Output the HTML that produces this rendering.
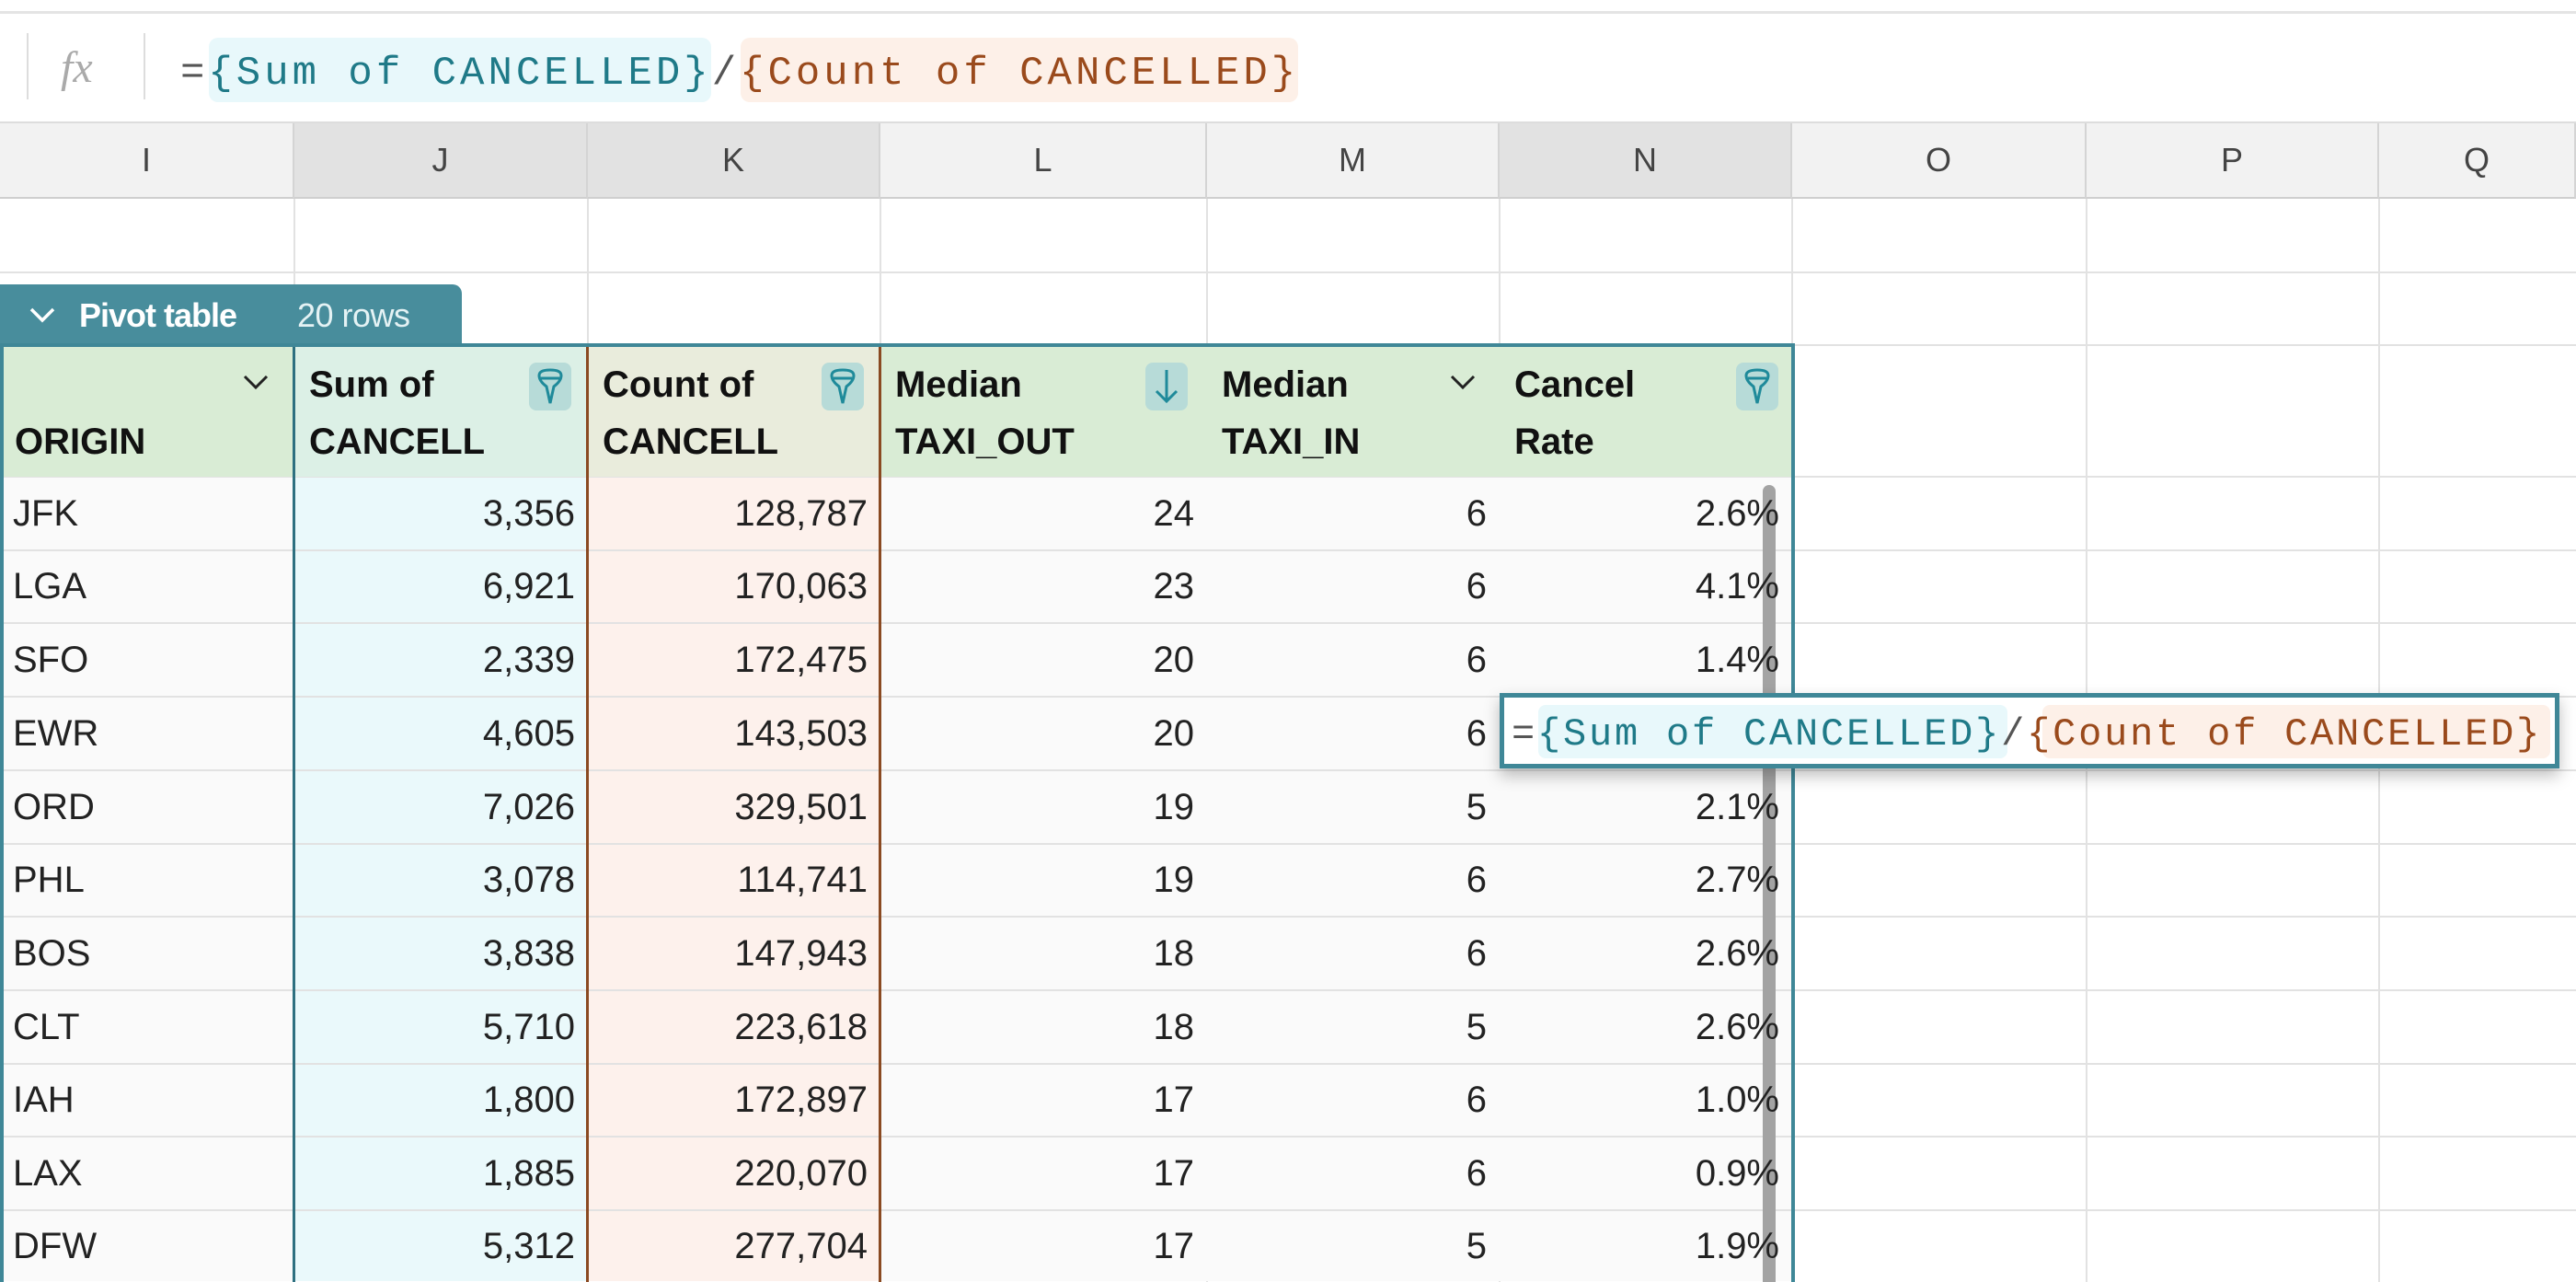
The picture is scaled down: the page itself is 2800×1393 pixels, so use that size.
<!DOCTYPE html>
<html><head><meta charset="utf-8"><style>
*{margin:0;padding:0;box-sizing:border-box}
html{width:2800px;height:1393px;overflow:hidden}
body{width:2800px;height:1393px;overflow:hidden;background:#fff;font-family:"Liberation Sans",sans-serif;position:relative}
.a{position:absolute}
.mono{font-family:"Liberation Mono",monospace}
.colh{position:absolute;top:134px;height:82px;background:#f2f2f2;border-right:2px solid #d4d4d4;border-bottom:2px solid #cfcfcf;font-size:36px;color:#444;display:flex;align-items:center;justify-content:center}
.sel{background:#e2e2e2}
.cell{position:absolute;font-size:40px;color:#222;display:flex;align-items:center;white-space:nowrap}
.ic{position:absolute;width:46px;height:52px;background:#b7dbd8;border-radius:8px}
</style></head><body>
<div class="a" style="left:0;top:12px;width:2800px;height:3px;background:#e4e4e4"></div>
<div class="a" style="left:29px;top:36px;width:2px;height:72px;background:#ddd"></div>
<div class="a" style="left:156px;top:36px;width:2px;height:72px;background:#ddd"></div>
<div class="a" style="left:66px;top:46px;font-size:48px;font-style:italic;color:#aaa;font-family:'Liberation Serif',serif">fx</div>
<div class="a" style="left:227px;top:41px;width:546px;height:70px;background:#e8f8fb;border-radius:10px"></div>
<div class="a" style="left:805px;top:41px;width:606px;height:70px;background:#fdf0e8;border-radius:10px"></div>
<div class="a mono" style="left:196px;top:55px;font-size:44px;letter-spacing:4px;white-space:nowrap;color:#555"><span>=</span><span style="color:#1f7a88">{Sum of CANCELLED}</span><span>/</span><span style="color:#9a4a1c">{Count of CANCELLED}</span></div>
<div class="a" style="left:0;top:132px;width:2800px;height:2px;background:#ddd"></div>
<div id="g"></div>
<script>
var g=document.getElementById('g'),h='';
var cols=[0,320,639,957,1312,1630,1948,2268,2586,2800],L=['I','J','K','L','M','N','O','P','Q'];
for(var i=0;i<9;i++){h+='<div class="colh'+((i==1||i==2||i==5)?' sel':'')+'" style="left:'+cols[i]+'px;width:'+(cols[i+1]-cols[i])+'px">'+L[i]+'</div>';}
for(var i=1;i<9;i++){h+='<div class="a" style="left:'+(cols[i]-1)+'px;top:216px;width:2px;height:1177px;background:#e2e2e2"></div>';}
var rl=[296,375,518];for(var k=1;k<11;k++)rl.push(Math.round(518+k*79.7));
rl.forEach(function(y){h+='<div class="a" style="left:0;top:'+(y-1)+'px;width:2800px;height:2px;background:#e2e2e2"></div>';});
h+='<div class="a" style="left:0;top:309px;width:502px;height:70px;background:#488d9c;border-radius:0 10px 0 0"></div>';
h+='<svg class="a" style="left:30px;top:330px" width="32" height="24"><path d="M4 6 L16 18 L28 6" fill="none" stroke="#fff" stroke-width="3.5"/></svg>';
h+='<div class="a" style="left:86px;top:322px;font-size:36px;font-weight:bold;color:#fff;letter-spacing:-1px">Pivot table</div>';
h+='<div class="a" style="left:323px;top:322px;font-size:36px;color:#e4f2f4;letter-spacing:-.5px">20 rows</div>';
var hb=['#d9ecd5','#dcf0e6','#e9ecdc','#d9ecd5','#d9ecd5','#d9ecd5'];
var ht=[['','ORIGIN'],['Sum of','CANCELL'],['Count of','CANCELL'],['Median','TAXI_OUT'],['Median','TAXI_IN'],['Cancel','Rate']];
for(var i=0;i<6;i++){h+='<div class="a" style="left:'+cols[i]+'px;top:375px;width:'+(cols[i+1]-cols[i])+'px;height:143px;background:'+hb[i]+'"></div>';
h+='<div class="a" style="left:'+(cols[i]+16)+'px;top:387px;font-size:40px;font-weight:bold;color:#111;line-height:62px">'+ht[i][0]+'<br>'+ht[i][1]+'</div>';}
var D=[['JFK','3,356','128,787','24','6','2.6%'],['LGA','6,921','170,063','23','6','4.1%'],['SFO','2,339','172,475','20','6','1.4%'],['EWR','4,605','143,503','20','6',''],['ORD','7,026','329,501','19','5','2.1%'],['PHL','3,078','114,741','19','6','2.7%'],['BOS','3,838','147,943','18','6','2.6%'],['CLT','5,710','223,618','18','5','2.6%'],['IAH','1,800','172,897','17','6','1.0%'],['LAX','1,885','220,070','17','6','0.9%'],['DFW','5,312','277,704','17','5','1.9%']];
var bg=['#fafafa','#eaf9fb','#fdf1ec','#fafafa','#fafafa','#fafafa'];
var txt='';
for(var r=0;r<11;r++){var y=Math.round(518+r*79.7),y2=Math.min(1393,Math.round(518+(r+1)*79.7));
for(var c=0;c<6;c++){h+='<div class="a" style="left:'+cols[c]+'px;top:'+(y+1)+'px;width:'+(cols[c+1]-cols[c])+'px;height:'+(y2-y-2)+'px;background:'+bg[c]+'"></div>';
var st=c==0?'left:'+(cols[c]+14)+'px;':'left:'+cols[c]+'px;width:'+(cols[c+1]-cols[c]-14)+'px;justify-content:flex-end;';
txt+='<div class="cell" style="'+st+'top:'+y+'px;height:'+(y2-y)+'px">'+D[r][c]+'</div>';}}
h+='<div class="a" style="left:1916px;top:527px;width:14px;height:866px;background:#a3a3a3;border-radius:7px 7px 0 0"></div>';
h+=txt;
h+='<div class="a" style="left:318px;top:375px;width:3px;height:1018px;background:#2e7080"></div>';
h+='<div class="a" style="left:637px;top:375px;width:3px;height:1018px;background:#8a4a22"></div>';
h+='<div class="a" style="left:955px;top:375px;width:3px;height:1018px;background:#8a4a22"></div>';
h+='<div class="a" style="left:0;top:373px;width:1951px;height:1020px;border:4px solid #3f8797;border-bottom:none"></div>';
[[575],[893],[1887]].forEach(function(p){h+='<div class="ic" style="left:'+p[0]+'px;top:394px"></div><svg class="a" style="left:'+p[0]+'px;top:394px" width="46" height="52"><path d="M11 14 Q11 8 23 8 Q35 8 35 14 Q35 20 27 26 L23 44 L19 26 Q11 20 11 14 Z M13 17 L33 17" fill="none" stroke="#1f8a9a" stroke-width="3"/></svg>';});
h+='<div class="ic" style="left:1245px;top:394px"></div><svg class="a" style="left:1245px;top:394px" width="46" height="52"><path d="M23 8 L23 42 M12 31 L23 42 L34 31" fill="none" stroke="#1f8a9a" stroke-width="3"/></svg>';
[[262],[1574]].forEach(function(p){h+='<svg class="a" style="left:'+p[0]+'px;top:404px" width="32" height="24"><path d="M4 5 L16 17 L28 5" fill="none" stroke="#222" stroke-width="3"/></svg>';});
g.innerHTML=h;
</script>
<div class="a" style="left:1630px;top:753px;width:1152px;height:82px;background:#fff;border:5px solid #3f8797;box-shadow:0 8px 16px rgba(0,0,0,.25)"></div>
<div class="a" style="left:1672px;top:766px;width:510px;height:58px;background:#e8f8fb;border-radius:8px"></div>
<div class="a" style="left:2220px;top:766px;width:552px;height:58px;background:#fdf0e8;border-radius:8px"></div>
<div class="a mono" style="left:1643px;top:774px;font-size:42px;letter-spacing:2.8px;white-space:nowrap;color:#555"><span>=</span><span style="color:#1f7a88">{Sum of CANCELLED}</span><span>/</span><span style="color:#9a4a1c">{Count of CANCELLED}</span></div>
</body></html>
